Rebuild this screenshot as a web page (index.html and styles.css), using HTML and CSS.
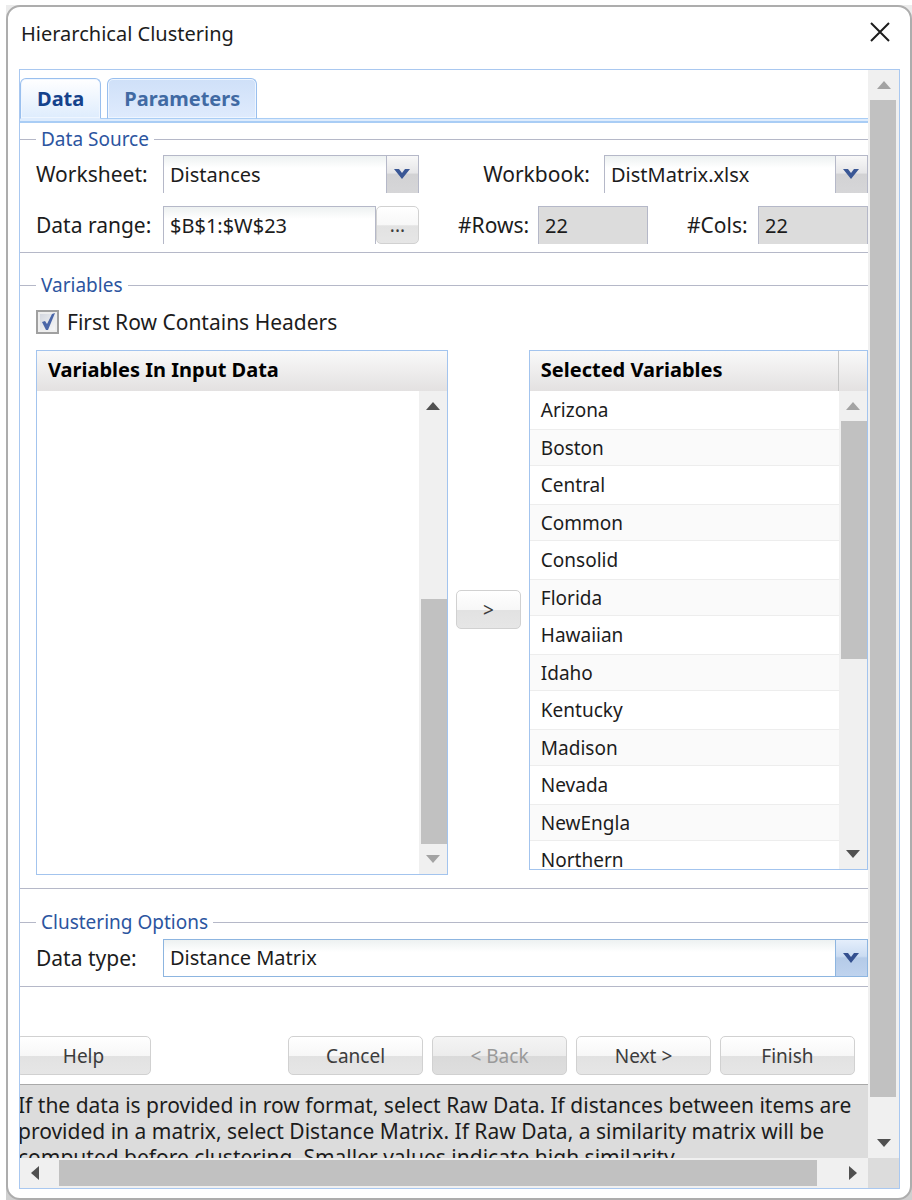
FILE: index.html
```html
<!DOCTYPE html>
<html lang="en">
<head>
    <meta charset="UTF-8">
    <meta name="viewport" content="width=device-width, initial-scale=1.0">
    <title>Hierarchical Clustering</title>
    <link rel="stylesheet" href="styles.css">
</head>
<body>
    <div class="sheet">
    <div class="dialog">
        <!-- Title bar -->
        <header class="titlebar">
            <h1>Hierarchical Clustering</h1>
            <button class="close" type="button" aria-label="Close">
                <svg width="20" height="20" viewBox="0 0 20 20"><path d="M1 1L19 19M19 1L1 19" stroke="#1c1c1c" stroke-width="2" fill="none"/></svg>
            </button>
        </header>

        <div class="frame">
            <form class="view">
                <!-- Tabs -->
                <div class="tabs" role="tablist">
                    <button class="tab active" type="button" role="tab" aria-selected="true">Data</button>
                    <button class="tab" type="button" role="tab" aria-selected="false">Parameters</button>
                </div>

                <!-- Data source -->
                <fieldset class="source">
                    <legend>Data Source</legend>
                    <div class="row">
                        <div class="field main-field">
                            <label for="worksheet">Worksheet:</label>
                            <div class="combo">
                                <select id="worksheet"><option>Distances</option></select>
                                <span class="trigger"><svg width="16" height="11" viewBox="0 0 16 11"><path d="M0 0H5L8 4L11 0H16L8 10Z" fill="#3a5795"/></svg></span>
                            </div>
                        </div>
                        <div class="field">
                            <label for="workbook">Workbook:</label>
                            <div class="combo workbook">
                                <select id="workbook"><option>DistMatrix.xlsx</option></select>
                                <span class="trigger"><svg width="16" height="11" viewBox="0 0 16 11"><path d="M0 0H5L8 4L11 0H16L8 10Z" fill="#3a5795"/></svg></span>
                            </div>
                        </div>
                    </div>
                    <div class="row">
                        <div class="field main-field">
                            <label for="range">Data range:</label>
                            <input class="text" type="text" id="range" value="$B$1:$W$23">
                            <button class="btn dots" type="button">...</button>
                        </div>
                        <div class="field count">
                            <label for="rows">#Rows:</label>
                            <input class="text" type="text" id="rows" value="22" readonly>
                        </div>
                        <div class="field count">
                            <label for="cols">#Cols:</label>
                            <input class="text" type="text" id="cols" value="22" readonly>
                        </div>
                    </div>
                </fieldset>

                <!-- Variables -->
                <fieldset class="variables">
                    <legend>Variables</legend>
                    <div class="check">
                        <input type="checkbox" id="headers" checked>
                        <label for="headers">First Row Contains Headers</label>
                        <svg class="tick" width="14" height="18" viewBox="0 0 14 18"><path d="M1 9L4 8L6 11L11 1L14 0L7 17H5Z" fill="#4a66a8"/></svg>
                    </div>
                    <div class="lists">
                        <section class="list input-list">
                            <h2>Variables In Input Data</h2>
                            <div class="list-body">
                                <ul></ul>
                                <div class="vscroll">
                                    <svg class="arrow" viewBox="0 0 14 8"><path d="M0 8L7 0L14 8Z"/></svg>
                                    <div class="track low"><div class="thumb"></div></div>
                                    <svg class="arrow off" viewBox="0 0 14 8"><path d="M0 0L7 8L14 0Z"/></svg>
                                </div>
                            </div>
                        </section>
                        <button class="btn move" type="button">&gt;</button>
                        <section class="list selected-list">
                            <h2>Selected Variables</h2>
                            <div class="list-body">
                                <ul>
                                    <li>Arizona</li>
                                    <li>Boston</li>
                                    <li>Central</li>
                                    <li>Common</li>
                                    <li>Consolid</li>
                                    <li>Florida</li>
                                    <li>Hawaiian</li>
                                    <li>Idaho</li>
                                    <li>Kentucky</li>
                                    <li>Madison</li>
                                    <li>Nevada</li>
                                    <li>NewEngla</li>
                                    <li>Northern</li>
                                </ul>
                                <div class="vscroll">
                                    <svg class="arrow off" viewBox="0 0 14 8"><path d="M0 8L7 0L14 8Z"/></svg>
                                    <div class="track high"><div class="thumb"></div></div>
                                    <svg class="arrow" viewBox="0 0 14 8"><path d="M0 0L7 8L14 0Z"/></svg>
                                </div>
                            </div>
                        </section>
                    </div>
                </fieldset>

                <!-- Clustering options -->
                <fieldset class="options">
                    <legend>Clustering Options</legend>
                    <div class="field main-field">
                        <label for="datatype">Data type:</label>
                        <div class="combo focused">
                            <select id="datatype"><option>Distance Matrix</option><option>Raw Data</option></select>
                            <span class="trigger"><svg width="16" height="11" viewBox="0 0 16 11"><path d="M0 0H5L8 4L11 0H16L8 10Z" fill="#34508f"/></svg></span>
                        </div>
                    </div>
                </fieldset>

                <!-- Buttons -->
                <div class="actions">
                    <button class="btn help" type="button">Help</button>
                    <button class="btn" type="button">Cancel</button>
                    <button class="btn" type="button" disabled>&lt; Back</button>
                    <button class="btn" type="button">Next &gt;</button>
                    <button class="btn" type="button">Finish</button>
                </div>

                <div class="hint">
                    <p>If the data is provided in row format, select Raw Data. If distances between items are provided in a matrix, select Distance Matrix. If Raw Data, a similarity matrix will be computed before clustering. Smaller values indicate high similarity.</p>
                </div>
            </form>

            <div class="vscroll outer">
                <svg class="arrow off" viewBox="0 0 14 8"><path d="M0 8L7 0L14 8Z"/></svg>
                <div class="track"><div class="thumb"></div></div>
                <svg class="arrow" viewBox="0 0 14 8"><path d="M0 0L7 8L14 0Z"/></svg>
            </div>
            <div class="hscroll">
                <svg class="arrow" viewBox="0 0 8 14"><path d="M8 0L0 7L8 14Z"/></svg>
                <div class="track"><div class="thumb"></div></div>
                <svg class="arrow" viewBox="0 0 8 14"><path d="M0 0L8 7L0 14Z"/></svg>
            </div>
            <div class="corner"></div>
        </div>
    </div>
    </div>
</body>
</html>
```

FILE: styles.css
```css
*{
    margin: 0;
    padding: 0;
    box-sizing: border-box;
}

body{
    font-family: "Noto Sans", sans-serif;
    font-size: 20px;
    color: #1c1c1c;
    background: #fff;
    padding: 5px 0 0 6px;
}

button, input, select{
    font: inherit;
    color: inherit;
}

.sheet{
    height: calc(100vh - 5px);
    background: linear-gradient(#ececec, #cfcfcf);
}

.dialog{
    height: 100%;
    display: flex;
    flex-direction: column;
    background: #fff;
    border: 2px solid #adadad;
    border-radius: 14px;
    padding: 0 10px 9px 11px;
}

/* title bar */
.titlebar{
    display: flex;
    justify-content: space-between;
    align-items: flex-start;
    height: 62px;
    padding: 13px 10px 0 2px;
}

.titlebar h1{
    font-size: 20px;
    font-weight: normal;
    line-height: 28px;
}

.close{
    border: none;
    background: none;
    width: 20px;
    height: 24px;
    display: flex;
    align-items: center;
}

/* scrolling frame */
.frame{
    flex: 1;
    min-height: 0;
    display: grid;
    grid-template-columns: 1fr 31px;
    grid-template-rows: 1fr 30px;
    border: 1px solid #a9c8f0;
}

.view{
    min-width: 0;
    min-height: 0;
    overflow: hidden;
    display: flex;
    flex-direction: column;
}

/* tabs */
.tabs{
    display: flex;
    flex-shrink: 0;
    gap: 6px;
    height: 53px;
    padding-top: 8px;
    background: linear-gradient(#a9cdf5, #a9cdf5) 0 48px / 100% 1px no-repeat,
        linear-gradient(#deecfd, #deecfd) 0 49px / 100% 2px no-repeat,
        linear-gradient(#a9cdf5, #a9cdf5) 0 51px / 100% 2px no-repeat;
}

.tab{
    height: 41px;
    padding: 0 16px;
    border: 1px solid #99bfee;
    border-bottom-color: #a9cdf5;
    border-radius: 6px 6px 0 0;
    background: linear-gradient(#cfe0f8, #dfebfd);
    box-shadow: inset 0 0 0 1px #eff6ff;
    font-weight: bold;
    color: #416aa3;
}

.tab.active{
    background: linear-gradient(#fff, #deecfd);
    border-bottom-color: #deecfd;
    color: #15428b;
}

/* fieldsets */
fieldset{
    flex-shrink: 0;
    min-width: 0;
    border: 1px solid #b5b8c8;
    border-width: 1px 0;
    padding: 0 0 0 16px;
}

legend{
    color: #2c55a0;
    font-size: 19px;
    line-height: 26px;
    padding: 0 5px;
}

.source{
    margin-top: 3px;
    padding-top: 3px;
    padding-bottom: 8px;
}

.variables{
    margin-top: 19px;
    padding-top: 11px;
    padding-bottom: 13px;
}

.options{
    margin-top: 20px;
    padding-top: 4px;
    padding-bottom: 9px;
}

.row{
    display: flex;
    justify-content: space-between;
}

.row + .row{
    margin-top: 13px;
}

.field{
    display: flex;
    align-items: center;
}

label{
    flex-shrink: 0;
    font-size: 21px;
    line-height: 26px;
    white-space: nowrap;
}

.main-field label{
    width: 127px;
}

.row .main-field{
    width: 383px;
}

.combo{
    display: grid;
    flex: 1;
    height: 38px;
}

.workbook{
    flex: none;
    width: 264px;
    margin-left: 14px;
}

.combo select, .text{
    grid-area: 1 / 1;
    height: 38px;
    min-width: 0;
    width: 100%;
    border: 1px solid #b5b8c8;
    border-bottom: none;
    border-radius: 0;
    padding: 0 6px 1px;
    background: linear-gradient(#edf1f1, #fff 12px);
    appearance: none;
    outline: none;
}

.trigger{
    grid-area: 1 / 1;
    justify-self: end;
    width: 32px;
    margin: 1px 1px 0 0;
    padding-right: 2px;
    display: flex;
    align-items: center;
    justify-content: center;
    border-left: 1px solid #b5b8c8;
    background: linear-gradient(#f8f8f8, #e6e6e8 45%, #d2d2d4 50%, #d6d6d8);
    pointer-events: none;
}

.focused select{
    border: 1px solid #8db5e0;
}

.focused .trigger{
    margin-bottom: 1px;
    border-color: #8db5e0;
    background: linear-gradient(#e4eefb, #cbdcf2 45%, #b5cbe8 50%, #bfd3ee);
}

.count label{
    width: 80px;
}

.count .text{
    width: 110px;
}

.count:last-child label{
    width: 71px;
}

.text[readonly]{
    background: #dcdcdc;
}

/* buttons */
.btn{
    height: 39px;
    border: 1px solid #d1d1d1;
    border-radius: 5px;
    background: linear-gradient(#fff, #f7f7f7 50%, #e2e2e2 52%, #e6e6e6);
    color: #3c3c3c;
    font-size: 19px;
    text-align: center;
}

.btn:disabled{
    background: linear-gradient(#f4f4f4, #ececec 50%, #dadada 52%, #dedede);
    color: #999;
}

.dots{
    flex: 0 0 43px;
    height: 38px;
}

/* checkbox */
.check{
    display: grid;
    grid-template-columns: 23px auto;
    justify-content: start;
    align-items: center;
    column-gap: 8px;
    height: 25px;
}

.check input{
    grid-area: 1 / 1;
    appearance: none;
    width: 23px;
    height: 24px;
    border: 2px solid #a0a0a0;
    background: linear-gradient(135deg, #cfd3dc, #fafafa);
    box-shadow: inset 0 0 0 2px #eee;
}

.tick{
    grid-area: 1 / 1;
    justify-self: center;
    pointer-events: none;
}

.check input:not(:checked) ~ .tick{
    display: none;
}

/* variable lists */
.lists{
    display: flex;
    align-items: flex-start;
    gap: 8px;
    margin-top: 16px;
}

.list{
    display: flex;
    flex-direction: column;
    border: 1px solid #a3c4ee;
    min-width: 0;
}

.input-list{
    flex: 412 1 0;
    height: 525px;
}

.selected-list{
    flex: 339 1 0;
    height: 520px;
}

.list h2{
    flex-shrink: 0;
    height: 40px;
    line-height: 38px;
    padding-left: 11px;
    font-size: 20px;
    color: #000;
    background: linear-gradient(#f9f9f9, #e3e1e1);
}

.selected-list h2{
    background: linear-gradient(#c5c5c5, #c5c5c5) right 28px top / 1px 100% no-repeat,
        linear-gradient(#f9f9f9, #e3e1e1);
}

.list-body{
    flex: 1;
    min-height: 0;
    display: flex;
}

.list ul{
    flex: 1;
    min-width: 0;
    overflow: hidden;
    list-style: none;
    font-size: 19px;
}

.list li{
    height: 38px;
    line-height: 38px;
    padding-left: 11px;
}

.list li:nth-child(even){
    height: 37px;
    line-height: 36px;
    background: #fafafa;
    border-top: 1px solid #ededed;
    border-bottom: 1px solid #ededed;
}

.move{
    width: 65px;
    margin-top: 240px;
}

/* scrollbars */
.vscroll{
    width: 28px;
    display: flex;
    flex-direction: column;
    align-items: center;
    background: #f0f0f0;
}

.vscroll .arrow{
    width: 14px;
    height: 30px;
    padding: 11px 0;
    flex-shrink: 0;
}

.arrow{
    fill: #505050;
}

.arrow.off{
    fill: #a3a3a3;
}

.track{
    flex: 1;
    display: flex;
    flex-direction: column;
    align-self: stretch;
    padding-left: 2px;
}

.thumb{
    flex: 1;
    background: #c1c1c1;
}

.low .thumb{
    flex: none;
    height: 58%;
    margin-top: auto;
}

.high .thumb{
    flex: none;
    height: 57%;
}

.vscroll.outer{
    width: 31px;
}

.outer .track{
    padding: 0 3px 31px 2px;
}

.hscroll{
    display: flex;
    align-items: center;
    background: #f0f0f0;
}

.hscroll .arrow{
    width: 30px;
    height: 14px;
}

.hscroll .track{
    padding: 2px 21px 2px 9px;
}

.corner{
    background: #dcdcdc;
}

/* bottom buttons and hint */
.actions{
    display: flex;
    flex-shrink: 0;
    gap: 9px;
    margin-top: 49px;
    padding-right: 13px;
}

.actions .btn{
    width: 135px;
}

.actions .help{
    margin-left: -4px;
    margin-right: auto;
}

.hint{
    flex: 1;
    margin-top: 9px;
    border-top: 1px solid #a9a9a9;
    background: #dcdcdc;
    font-size: 21px;
    line-height: 26px;
    padding-top: 7px;
}

.hint p{
    margin-left: -2px;
}
```
